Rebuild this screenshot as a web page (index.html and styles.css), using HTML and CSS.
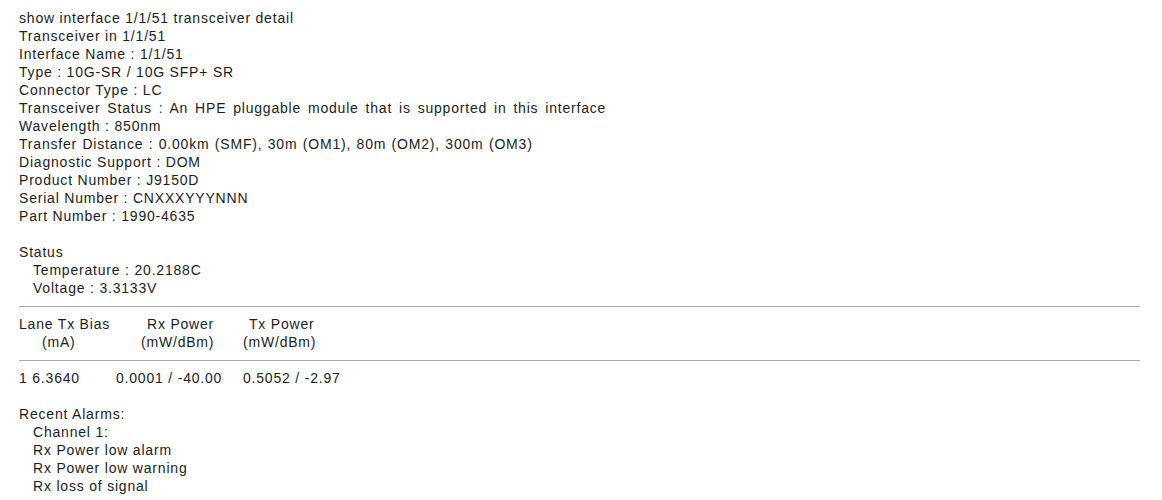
FILE: index.html
```html
<!DOCTYPE html>
<html>
<head>
<meta charset="utf-8">
<link rel="stylesheet" href="styles.css">
</head>
<body>
<div class="cli">
  <div class="block">
    <div>show interface 1/1/51 transceiver detail</div>
    <div>Transceiver in 1/1/51</div>
    <div>Interface Name : 1/1/51</div>
    <div>Type : 10G-SR / 10G SFP+ SR</div>
    <div>Connector Type : LC</div>
    <div class="wide">Transceiver Status : An HPE pluggable module that is supported in this interface</div>
    <div>Wavelength : 850nm</div>
    <div class="mid">Transfer Distance : 0.00km (SMF), 30m (OM1), 80m (OM2), 300m (OM3)</div>
    <div>Diagnostic Support : DOM</div>
    <div>Product Number : J9150D</div>
    <div>Serial Number : CNXXXYYYNNN</div>
    <div>Part Number : 1990-4635</div>
  </div>
  <div class="block gap">
    <div>Status</div>
    <div class="indent">Temperature : 20.2188C</div>
    <div class="indent">Voltage : 3.3133V</div>
  </div>
  <div class="rule"></div>
  <div class="table head">
    <div class="c1"><span>Lane Tx Bias</span><span class="sub1">(mA)</span></div>
    <div class="c2"><span class="top2">Rx Power</span><span>(mW/dBm)</span></div>
    <div class="c3"><span class="top3">Tx Power</span><span>(mW/dBm)</span></div>
  </div>
  <div class="rule"></div>
  <div class="table data">
    <div class="c1">1 6.3640</div>
    <div class="c2">0.0001 / -40.00</div>
    <div class="c3">0.5052 / -2.97</div>
  </div>
  <div class="block gap">
    <div>Recent Alarms:</div>
    <div class="indent">Channel 1:</div>
    <div class="indent">Rx Power low alarm</div>
    <div class="indent">Rx Power low warning</div>
    <div class="indent">Rx loss of signal</div>
  </div>
</div>
</body>
</html>
```

FILE: styles.css
```css
html, body {
  margin: 0;
  padding: 0;
  background: #ffffff;
}

.cli {
  padding: 9px 22px 0 19px;
  font-family: "Liberation Sans", Arial, sans-serif;
  font-size: 14px;
  line-height: 18px;
  letter-spacing: 0.8px;
  color: #1c1c1c;
}

.wide {
  word-spacing: 2.2px;
}

.mid {
  word-spacing: 0.7px;
}

.gap {
  margin-top: 18px;
}

.indent {
  padding-left: 14px;
}

.rule {
  height: 0;
  border-top: 1px solid #a9a9a9;
  margin: 9px 0 8px 0;
}

.table {
  display: grid;
  grid-template-columns: 97px 127px 120px;
}

.head > div {
  display: flex;
  flex-direction: column;
  align-items: flex-start;
}

.sub1 {
  padding-left: 23px;
}

.head .c2 {
  padding-left: 25px;
}

.top2 {
  padding-left: 6px;
}

.top3 {
  padding-left: 6px;
}

.data {
  margin-top: 1px;
}
```
